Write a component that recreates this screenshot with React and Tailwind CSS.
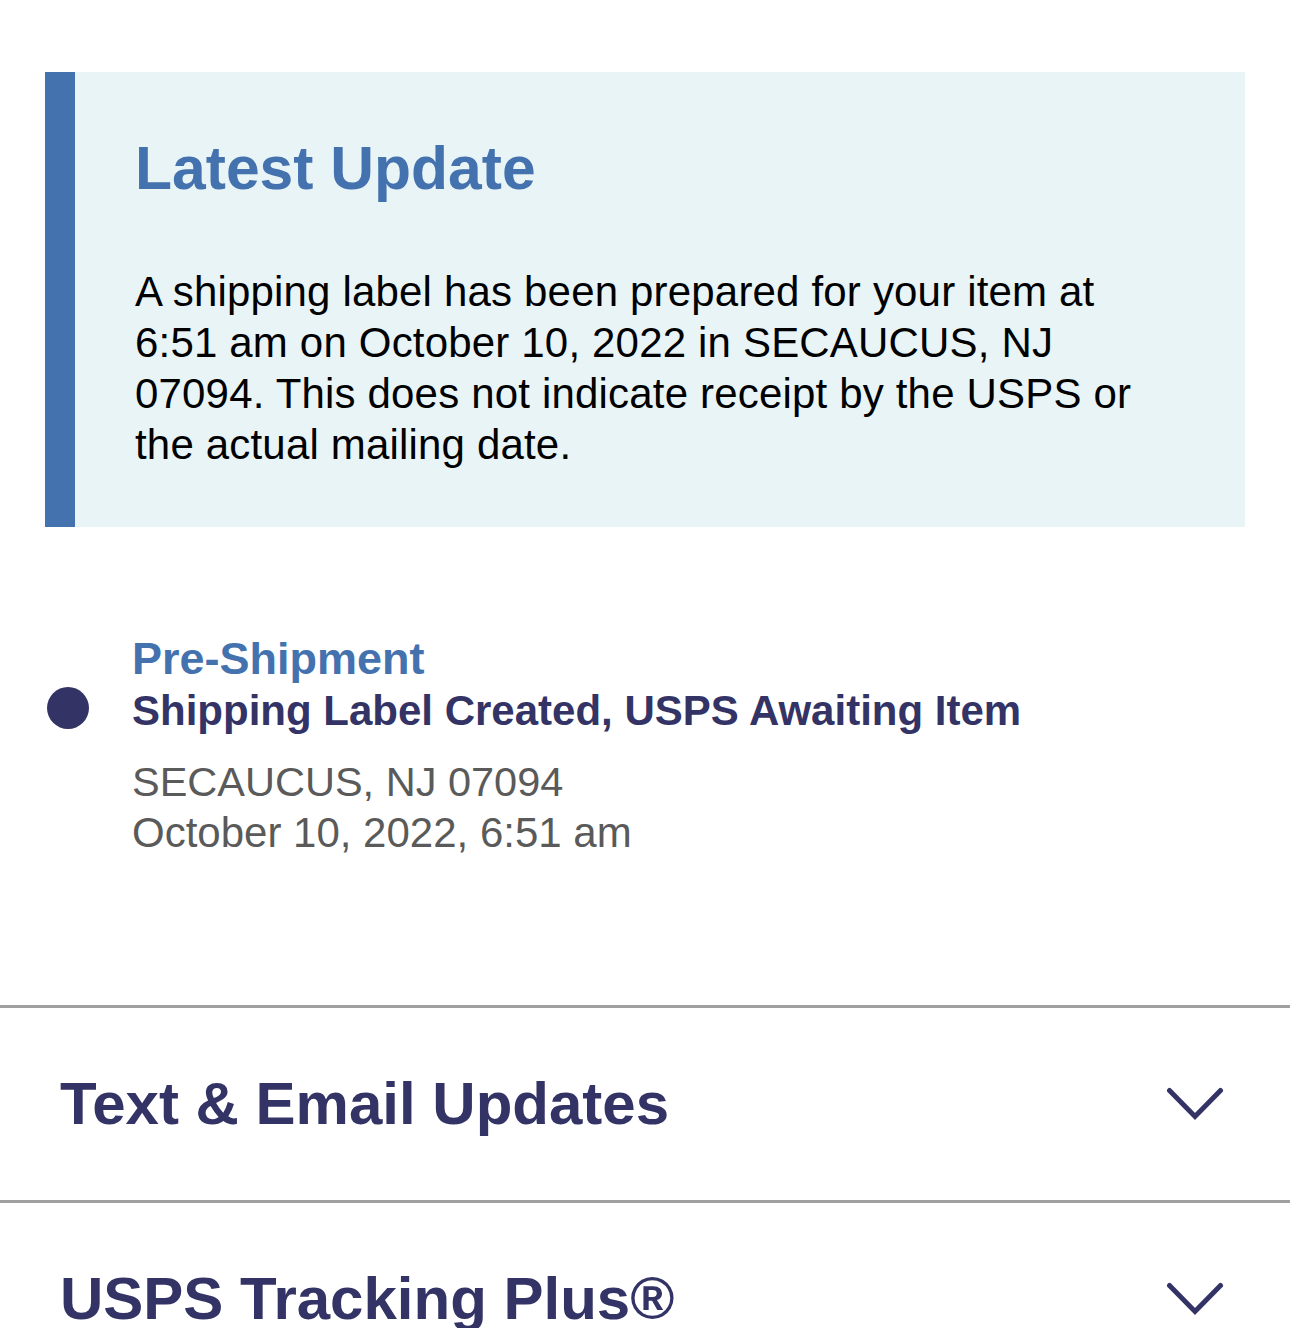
export default function App() {
  const font = { fontFamily: '"Liberation Sans", Arial, Helvetica, sans-serif' };
  const Chevron = () => (
    <svg width="58" height="34" viewBox="0 0 58 34" fill="none" className="shrink-0">
      <path d="M3.5 3.5 L29 29.5 L54.5 3.5" stroke="#333366" strokeWidth="5" strokeLinecap="round" strokeLinejoin="miter" />
    </svg>
  );
  return (
    <div className="h-[1328px] overflow-hidden bg-white" style={font}>
      <div className="px-[45px] pt-[72px]">
        <div className="flex bg-[#e8f4f6]">
          <div className="w-[30px] shrink-0 bg-[#4472ae]" />
          <div className="pl-[60px] pr-[40px] pt-[66px] pb-[57px]">
            <h2 className="text-[60.6px] leading-[60px] font-bold text-[#4472ae]">Latest Update</h2>
            <p className="mt-[68px] text-[42px] leading-[51px] tracking-[0.18px] text-black max-w-[1020px]">
              A shipping label has been prepared for your item at 6:51 am on October 10, 2022 in SECAUCUS, NJ 07094. This does not indicate receipt by the USPS or the actual mailing date.
            </p>
          </div>
        </div>
      </div>

      <div className="mt-[106px] flex items-start px-[45px]">
        <div className="ml-[2px] mt-[54px] h-[42px] w-[42px] shrink-0 rounded-full bg-[#333366]" />
        <div className="ml-[43px]">
          <div className="text-[45px] leading-[52px] font-bold text-[#4472ae]">Pre-Shipment</div>
          <div className="text-[42px] leading-[52px] font-bold text-[#333366]">Shipping Label Created, USPS Awaiting Item</div>
          <div className="mt-[19px] text-[41.5px] leading-[51px] text-[#5a5a5a]">SECAUCUS, NJ 07094</div>
          <div className="text-[42px] leading-[51px] text-[#5a5a5a]">October 10, 2022, 6:51 am</div>
        </div>
      </div>

      <div className="mt-[147px]">
        <div className="flex h-[195px] items-center justify-between border-t-[3px] border-[#a0a0a0] pl-[60px] pr-[66px]">
          <span className="text-[60px] leading-[70px] font-bold text-[#333366]">Text &amp; Email Updates</span>
          <Chevron />
        </div>
        <div className="flex h-[195px] items-center justify-between border-t-[3px] border-[#a0a0a0] pl-[60px] pr-[66px]">
          <span className="text-[60px] leading-[70px] font-bold text-[#333366]">USPS Tracking Plus®</span>
          <Chevron />
        </div>
      </div>
    </div>
  );
}
